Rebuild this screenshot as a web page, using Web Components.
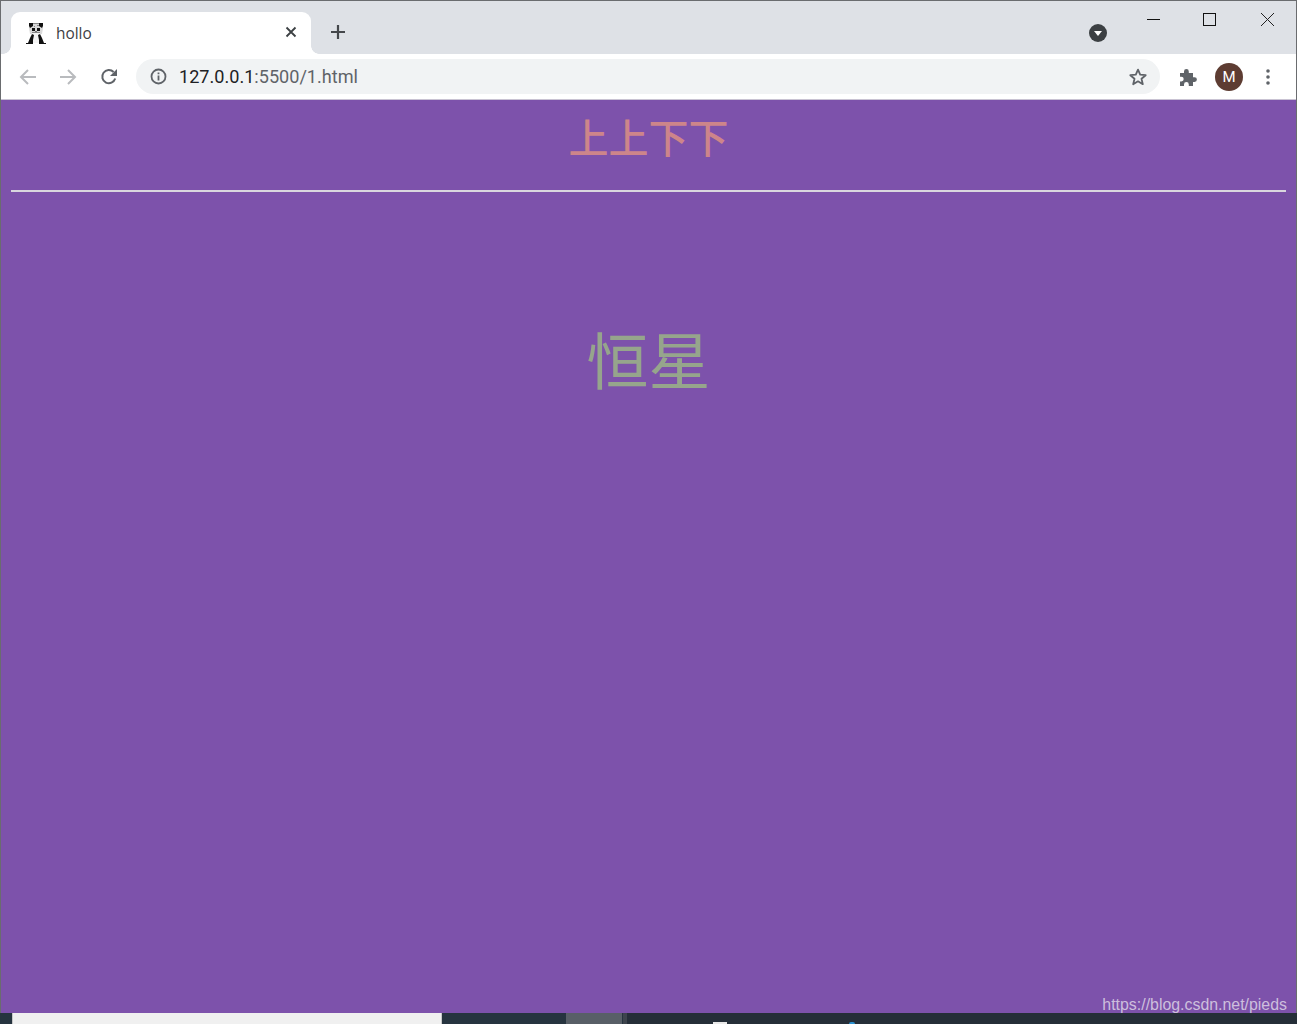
<!DOCTYPE html>
<html lang="zh">
<head>
<meta charset="utf-8">
<title>hollo</title>
<style>
  html, body { margin: 0; height: 100%; overflow: hidden; background: #7d52ab; }
  body { font-family: "Open Sans", "Liberation Sans", "Noto Sans CJK SC", sans-serif; }
</style>
</head>
<body>
<browser-window>
  <tab-strip slot="tabs" title-text="hollo"></tab-strip>
  <tool-bar slot="toolbar" host-text="127.0.0.1" path-text=":5500/1.html"></tool-bar>
  <star-page slot="page" heading="上上下下" star="恒星"></star-page>
  <task-bar slot="taskbar"></task-bar>
</browser-window>

<script>
class BrowserWindow extends HTMLElement {
  css = () => /* css */ `
  :host {
    display: flex;
    flex-direction: column;
    width: 1297px;
    height: 1024px;
    box-sizing: border-box;
    position: relative;
    border-top: 1px solid #6a6c6f;
    background: #7d52ab;
  }
  .edge {
    position: absolute;
    left: 0;
    top: 0;
    bottom: 11px;
    width: 1px;
    background: #6a6c6f;
  }
  .edge.right { left: auto; right: 0; }
  `;

  constructor() {
    super();
    this.attachShadow({ mode: "open" });
  }

  connectedCallback() {
    this.shadowRoot.innerHTML = /* html */ `
    <style>${this.css()}</style>
    <slot name="tabs"></slot>
    <slot name="toolbar"></slot>
    <slot name="page"></slot>
    <slot name="taskbar"></slot>
    <div class="edge"></div>
    <div class="edge right"></div>
    `;
  }
}

class TabStrip extends HTMLElement {
  css = () => /* css */ `
  :host {
    display: flex;
    align-items: flex-end;
    height: 53px;
    flex: none;
    background: #dee1e6;
    padding-left: 11px;
    position: relative;
    font-family: "Open Sans", "Liberation Sans", sans-serif;
  }
  .tab {
    width: 300px;
    height: 42px;
    box-sizing: border-box;
    background: #fff;
    border-radius: 9px 9px 0 0;
    display: flex;
    align-items: center;
    padding: 0 13px 0 15px;
    position: relative;
  }
  .tab::before, .tab::after {
    content: "";
    position: absolute;
    bottom: 0;
    width: 8px;
    height: 8px;
  }
  .tab::before { left: -8px; background: radial-gradient(circle at 0 0, #dee1e6 7.5px, #fff 8px); }
  .tab::after { right: -8px; background: radial-gradient(circle at 100% 0, #dee1e6 7.5px, #fff 8px); }
  .favicon { width: 20px; height: 22px; flex: none; margin-top: -1px; }
  .title {
    flex: 1;
    margin-left: 10px;
    font-size: 15.4px;
    color: #3c4043;
  }
  .close { width: 12px; height: 12px; flex: none; margin-right: 1px; margin-top: -2px; }
  .new-tab { width: 16px; height: 16px; margin: 0 0 14px 19px; flex: none; }
  .spacer { flex: 1; }
  .tab-search { width: 18px; height: 18px; flex: none; margin: 0 190px 12px 0; }
  .controls {
    position: absolute;
    top: 0;
    right: 0;
    display: flex;
  }
  .controls svg { width: 58px; height: 36px; display: block; }
  `;

  constructor() {
    super();
    this.attachShadow({ mode: "open" });
  }

  connectedCallback() {
    this.shadowRoot.innerHTML = /* html */ `
    <style>${this.css()}</style>
    <div class="tab">
      <svg class="favicon" viewBox="0 0 20 22">
        <path fill="#d9d9d9" d="M5 2h10l2 4-1 6H4L3 6z"/>
        <path fill="#f4f4f4" d="M6 11h8l1 10H5z"/>
        <path fill="#111" d="M3 1h4v3l-3 2-1-2zM13 1h4v3l-1 2-3-2zM6 6h3v3H6zM11 6h3v3h-3zM9 9.500h2v1H9zM6 12l-2 4-2 5H0v1h7v-4l1-5zM14 12l2 4 2 5h2v1h-7v-4l-1-5z"/>
        <path fill="#888" d="M7 1h6v1H7zM8 4h1v1H8zM11 3h2v1h-2zM6 10h8v1H6z"/>
      </svg>
      <span class="title">${this.getAttribute("title-text")}</span>
      <svg class="close" viewBox="0 0 12 12"><path d="M1.500 1.500l9 9M10.500 1.500l-9 9" stroke="#3c4043" stroke-width="1.800" fill="none"/></svg>
    </div>
    <svg class="new-tab" viewBox="0 0 16 16"><path d="M8 1v14M1 8h14" stroke="#44474b" stroke-width="2.200" fill="none"/></svg>
    <div class="spacer"></div>
    <svg class="tab-search" viewBox="0 0 18 18"><circle cx="9" cy="9" r="9" fill="#3c4043"/><path d="M5 7h8l-4 5z" fill="#fff"/></svg>
    <div class="controls">
      <svg viewBox="0 0 58 36"><path d="M24 18.500h13" stroke="#111" fill="none"/></svg>
      <svg viewBox="0 0 58 36"><rect x="22.500" y="12.500" width="12" height="12" stroke="#111" fill="none"/></svg>
      <svg viewBox="0 0 58 36"><path d="M22 12l13 13M35 12L22 25" stroke="#222" fill="none"/></svg>
    </div>
    `;
  }
}

class ToolBar extends HTMLElement {
  css = () => /* css */ `
  :host {
    display: flex;
    align-items: center;
    height: 45px;
    flex: none;
    box-sizing: border-box;
    background: #fff;
    padding: 0 19px;
    font-family: "Roboto", "Liberation Sans", sans-serif;
  }
  svg { display: block; flex: none; }
  .nav { width: 18px; height: 18px; margin-right: 22px; }
  .nav.forward { margin-right: 23px; }
  .reload { margin-right: 18px; }
  .omnibox {
    flex: none;
    width: 1024px;
    height: 35px;
    box-sizing: border-box;
    border-radius: 18px;
    background: #f1f3f4;
    display: flex;
    align-items: center;
    padding: 0 12px 0 14px;
    font-size: 18.1px;
  }
  .info { width: 17px; height: 17px; margin-right: 12px; }
  .url { flex: 1; white-space: nowrap; color: #5f6368; }
  .url b { font-weight: 400; color: #202124; }
  .star { width: 20px; height: 20px; }
  .puzzle { width: 20px; height: 20px; margin-left: 18px; }
  .avatar {
    width: 28px;
    height: 28px;
    margin-left: 17px;
    border-radius: 50%;
    background: #5d3c32;
    color: #fff;
    font-size: 15px;
    display: flex;
    align-items: center;
    justify-content: center;
    flex: none;
  }
  .menu { width: 4px; height: 16px; margin-left: 23px; }
  `;

  constructor() {
    super();
    this.attachShadow({ mode: "open" });
  }

  connectedCallback() {
    this.shadowRoot.innerHTML = /* html */ `
    <style>${this.css()}</style>
    <svg class="nav" viewBox="0 0 18 18"><path d="M17 9H2M9 2L2 9l7 7" stroke="#b9bbbe" stroke-width="2" fill="none"/></svg>
    <svg class="nav forward" viewBox="0 0 18 18"><path d="M1 9h15M9 2l7 7-7 7" stroke="#b9bbbe" stroke-width="2" fill="none"/></svg>
    <svg class="nav reload" viewBox="0 0 18 18"><path d="M15.200 10.500A6.600 6.600 0 1 1 13.600 4" stroke="#5f6368" stroke-width="2" fill="none"/><path d="M17 1v7h-7z" fill="#5f6368"/></svg>
    <div class="omnibox">
      <svg class="info" viewBox="0 0 17 17"><circle cx="8.500" cy="8.500" r="7" stroke="#5f6368" stroke-width="1.800" fill="none"/><path d="M7.600 7.500h1.800v5H7.600zM7.600 4.500h1.800v1.800H7.600z" fill="#5f6368"/></svg>
      <span class="url"><b>${this.getAttribute("host-text")}</b>${this.getAttribute("path-text")}</span>
      <svg class="star" viewBox="0 0 20 20"><path d="M10 2.600l2.200 5.100 5.500.5-4.200 3.600 1.300 5.400L10 14.300l-4.800 2.900 1.300-5.400-4.200-3.600 5.500-.5z" stroke="#5f6368" stroke-width="1.800" stroke-linejoin="round" fill="none"/></svg>
    </div>
    <svg class="puzzle" viewBox="0 0 20 20"><path d="M2 6h4V4.500a2.400 2.400 0 0 1 4.800 0V6h4.200v4.200h1.500a2.400 2.400 0 0 1 0 4.800H15v4H10.800v-1.500a2.400 2.400 0 0 0-4.800 0V19H2v-4.500h1.300a2.400 2.400 0 0 0 0-4.800H2z" fill="#5f6368"/></svg>
    <div class="avatar">M</div>
    <svg class="menu" viewBox="0 0 4 16"><circle cx="2" cy="2" r="1.800" fill="#5f6368"/><circle cx="2" cy="8" r="1.800" fill="#5f6368"/><circle cx="2" cy="14" r="1.800" fill="#5f6368"/></svg>
    `;
  }
}

class StarPage extends HTMLElement {
  css = () => /* css */ `
  :host {
    display: block;
    flex: 1;
    min-height: 0;
    position: relative;
    background: #7d52ab;
    border-top: 1px solid #c9c3d3;
    font-family: "Noto Sans CJK SC", "Liberation Sans", sans-serif;
    text-align: center;
  }
  h1 {
    margin: 0;
    height: 74px;
    font-size: 40px;
    font-weight: 500;
    line-height: 72px;
    color: #cd858a;
  }
  hr {
    margin: 16px 11px 0 11px;
    border: none;
    height: 1.500px;
    background: #d9d6de;
  }
  .star {
    margin-top: 123px;
    font-size: 62px;
    line-height: 86px;
    font-weight: 400;
    color: #96a58c;
  }
  .mark {
    position: absolute;
    right: 10px;
    bottom: -2px;
    font-family: "Liberation Sans", sans-serif;
    font-size: 15.9px;
    line-height: 20px;
    color: #cdbfdd;
  }
  `;

  constructor() {
    super();
    this.attachShadow({ mode: "open" });
  }

  connectedCallback() {
    this.shadowRoot.innerHTML = /* html */ `
    <style>${this.css()}</style>
    <h1>${this.getAttribute("heading")}</h1>
    <hr>
    <div class="star">${this.getAttribute("star")}</div>
    <div class="mark">https://blog.csdn.net/pieds</div>
    `;
  }
}

class TaskBar extends HTMLElement {
  css = () => /* css */ `
  :host {
    display: flex;
    flex: none;
    height: 11px;
    background: #26343f;
  }
  .left { width: 12px; flex: none; }
  .window { width: 430px; flex: none; box-sizing: border-box; background: #f0f0f0; border-left: 1px solid #c8c8c8; border-right: 1px solid #c8c8c8; }
  .gap { width: 124px; flex: none; }
  .pinned { width: 56px; flex: none; background: #585f67; }
  .sep { width: 4px; flex: none; margin-left: 1px; background: #3d444c; }
  .rest { flex: 1; background: #252e38; position: relative; }
  .glyph { position: absolute; left: 86px; top: 9px; width: 14px; height: 2px; background: #e8e8e8; }
  .dot { position: absolute; left: 222px; top: 9px; width: 6px; height: 2px; border-radius: 3px 3px 0 0; background: #2a90d0; }
  `;

  constructor() {
    super();
    this.attachShadow({ mode: "open" });
  }

  connectedCallback() {
    this.shadowRoot.innerHTML = /* html */ `
    <style>${this.css()}</style>
    <div class="left"></div>
    <div class="window"></div>
    <div class="gap"></div>
    <div class="pinned"></div>
    <div class="sep"></div>
    <div class="rest"><div class="glyph"></div><div class="dot"></div></div>
    `;
  }
}

customElements.define("browser-window", BrowserWindow);
customElements.define("tab-strip", TabStrip);
customElements.define("tool-bar", ToolBar);
customElements.define("star-page", StarPage);
customElements.define("task-bar", TaskBar);
</script>
</body>
</html>
